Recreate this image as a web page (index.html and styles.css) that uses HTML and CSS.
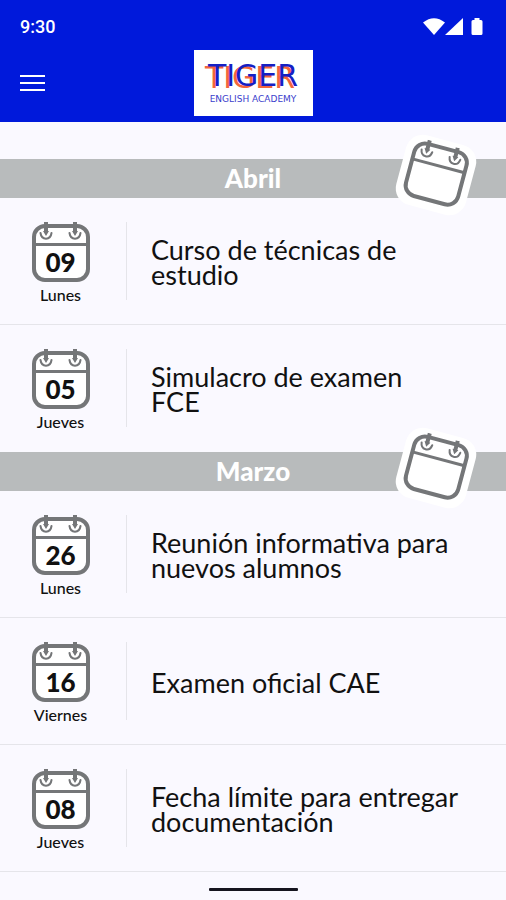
FILE: index.html
```html
<!DOCTYPE html>
<html lang="es">
<head>
<meta charset="utf-8">
<meta name="viewport" content="width=device-width, initial-scale=1">
<title>Tiger English Academy</title>
<link rel="stylesheet" href="styles.css">
</head>
<body>
<svg class="defs" aria-hidden="true">
  <symbol id="calendar" viewBox="0 0 60 62">
    <rect class="cal-body" x="3" y="4" width="54" height="54" rx="11"/>
    <path class="cal-line" d="M3 22.500H57"/>
    <path class="cal-ring" d="M9.500 11C10.500 18.500 19.500 18.500 20.500 11M38.500 11C39.500 18.500 48.500 18.500 49.500 11"/>
    <path class="cal-pin" d="M15 0V10M44 0V10"/>
    <path class="cal-tip" d="M12 9H18L15 14ZM41 9H47L44 14Z"/>
  </symbol>
</svg>
<header class="top">
  <div class="status">
    <span>9:30</span>
    <svg class="status-icons" viewBox="0 0 60 18" aria-hidden="true">
      <path d="M0 4.500Q11 -4 22 4.500L11 17Z"/>
      <path d="M40 0V17H22Z"/>
      <path d="M50 2H51.500V0H56.500V2H58Q59.500 2 59.500 3.500V15.500Q59.500 17 58 17H50Q48.500 17 48.500 15.500V3.500Q48.500 2 50 2Z"/>
    </svg>
  </div>
  <div class="nav">
    <button class="menu" type="button" aria-label="Menú">
      <svg viewBox="0 0 25 18" aria-hidden="true"><path d="M0 2H25M0 9H25M0 16H25"/></svg>
    </button>
    <a class="logo" href="#">
      <span class="logo-name">TIGER</span>
      <span class="logo-sub">ENGLISH ACADEMY</span>
    </a>
  </div>
</header>
<main>
  <section>
    <h2 class="month">Abril<svg class="month-icon" viewBox="0 0 80 80" aria-hidden="true"><g transform="rotate(15 40 40)"><rect class="halo" x="4" y="4" width="72" height="72" rx="17"/><use href="#calendar" x="10" y="8" width="60" height="62"/></g></svg></h2>
    <ul class="events">
      <li class="event">
        <div class="date"><span class="day"><svg aria-hidden="true"><use href="#calendar"/></svg><b>09</b></span><span class="weekday">Lunes</span></div>
        <p class="title">Curso de técnicas de<br>estudio</p>
      </li>
      <li class="event">
        <div class="date"><span class="day"><svg aria-hidden="true"><use href="#calendar"/></svg><b>05</b></span><span class="weekday">Jueves</span></div>
        <p class="title">Simulacro de examen<br>FCE</p>
      </li>
    </ul>
  </section>
  <section>
    <h2 class="month">Marzo<svg class="month-icon" viewBox="0 0 80 80" aria-hidden="true"><g transform="rotate(15 40 40)"><rect class="halo" x="4" y="4" width="72" height="72" rx="17"/><use href="#calendar" x="10" y="8" width="60" height="62"/></g></svg></h2>
    <ul class="events">
      <li class="event">
        <div class="date"><span class="day"><svg aria-hidden="true"><use href="#calendar"/></svg><b>26</b></span><span class="weekday">Lunes</span></div>
        <p class="title">Reunión informativa para<br>nuevos alumnos</p>
      </li>
      <li class="event">
        <div class="date"><span class="day"><svg aria-hidden="true"><use href="#calendar"/></svg><b>16</b></span><span class="weekday">Viernes</span></div>
        <p class="title">Examen oficial CAE</p>
      </li>
      <li class="event">
        <div class="date"><span class="day"><svg aria-hidden="true"><use href="#calendar"/></svg><b>08</b></span><span class="weekday">Jueves</span></div>
        <p class="title">Fecha límite para entregar<br>documentación</p>
      </li>
    </ul>
  </section>
</main>
<footer class="home"><span class="home-bar"></span></footer>
</body>
</html>
```
FILE: styles.css
```css
* { box-sizing: border-box; }
body {
  margin: 0;
  background: #faf9ff;
  color: #111;
  font-family: Lato, sans-serif;
}
.defs { position: absolute; width: 0; height: 0; }
.top {
  background: #0019db;
  color: #fff;
  padding: 17px 20px 6px;
}
.status {
  display: flex;
  justify-content: space-between;
  align-items: center;
  height: 20px;
  padding-right: 3px;
  font: 500 18px/20px Roboto, sans-serif;
}
.status-icons { width: 60px; height: 18px; fill: #fff; }
.nav {
  display: grid;
  grid-template-columns: 1fr auto 1fr;
  align-items: center;
  margin-top: 13px;
}
.menu {
  width: 25px;
  height: 18px;
  padding: 0;
  border: 0;
  background: none;
}
.menu svg { display: block; width: 100%; height: 100%; stroke: #fff; stroke-width: 2; }
.logo {
  display: flex;
  flex-direction: column;
  align-items: center;
  width: 119px;
  height: 66px;
  padding-top: 9px;
  background: #fff;
  color: #1520c4;
  text-decoration: none;
}
.logo-name {
  font: 400 30px/34px "DejaVu Sans", sans-serif;
  text-shadow: -3px 2px 0 #f4663c;
}
.logo-sub { font: 400 9px/12px "DejaVu Sans", sans-serif; color: #3a40cc; }
main { padding-top: 37px; }
.month {
  position: relative;
  margin: 0;
  background: #b8bbbc;
  color: #fff;
  font: 900 26px/39px Lato, sans-serif;
  text-align: center;
}
.month-icon {
  position: absolute;
  right: 30px;
  top: -24px;
  width: 80px;
  height: 80px;
  overflow: visible;
}
.halo { fill: #fff; }
.cal-body { fill: #fff; stroke: #747678; stroke-width: 4; }
.cal-line { fill: none; stroke: #747678; stroke-width: 3; }
.cal-pin { fill: none; stroke: #747678; stroke-width: 4; }
.cal-tip { fill: #747678; }
.cal-ring { fill: none; stroke: #747678; stroke-width: 2; stroke-linecap: round; }
.events { list-style: none; margin: 0; padding: 0; }
.event {
  display: flex;
  height: 127px;
  padding: 24px 20px 24px 0;
  border-bottom: 1px solid #e5e5ea;
}
section:first-child .event:last-child { border-bottom-color: transparent; }
.date {
  flex: none;
  display: flex;
  flex-direction: column;
  align-items: center;
  width: 127px;
  padding-right: 5px;
  border-right: 1px solid #e5e5ea;
}
.day { display: grid; width: 60px; height: 62px; }
.day svg, .day b { grid-area: 1 / 1; }
.day svg { width: 60px; height: 62px; }
.day b {
  font: 900 26px/32px Lato, sans-serif;
  text-align: center;
  padding-top: 24px;
}
.weekday { font: 500 16px/18px Lato, sans-serif; margin-top: 2px; }
.title {
  align-self: center;
  margin: 0;
  padding: 2px 0 0 24px;
  font: 400 27px/25px Lato, sans-serif;
}
.home { display: flex; justify-content: center; padding: 16px 0 9px; }
.home-bar { width: 89px; height: 3px; border-radius: 1px; background: #16151f; }
```
